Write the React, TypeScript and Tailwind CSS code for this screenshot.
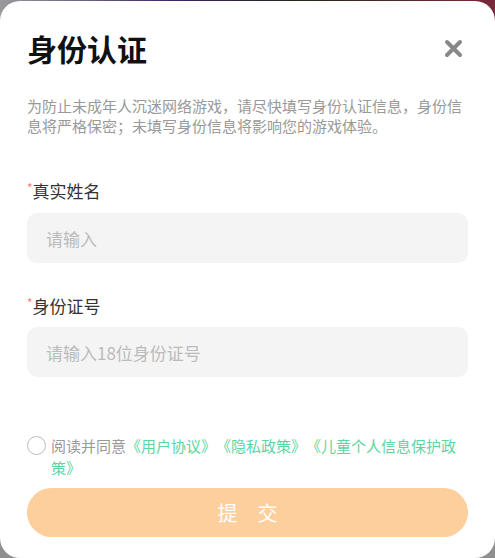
import { useState } from "react";

const FONT = "font-['Microsoft_YaHei','Noto_Sans_CJK_SC','Noto_Sans',sans-serif]";

export default function App() {
  const [agreed, setAgreed] = useState(false);

  return (
    <div
      className={`h-[558px] w-[495px] overflow-hidden bg-[linear-gradient(to_bottom,transparent_0,transparent_24px,#8f8f8f_24px),linear-gradient(to_right,#9a9a9a,#3b2466_35%,#25261c_60%,#7a2a3c)] pt-[1px] ${FONT}`}
    >
      <div className="flex h-[557px] flex-col rounded-[20px] bg-white px-[27px]">
        {/* Header */}
        <div className="flex items-center justify-between pt-[29px]">
          <h1 className="text-[30px] font-bold leading-[36px] text-[#111]">身份认证</h1>
          <button className="mr-[5px] text-[#888]" aria-label="close">
            <svg width="19" height="19" viewBox="0 0 19 19">
              <path d="M3 3 L16 16 M16 3 L3 16" stroke="currentColor" strokeWidth="4" strokeLinecap="round" />
            </svg>
          </button>
        </div>

        <p className="mt-[30px] break-all text-[15px] leading-[20px] text-[#999] [text-spacing-trim:space-all]">
          为防止未成年人沉迷网络游戏，请尽快填写身份认证信息，身份信息将严格保密；未填写身份信息将影响您的游戏体验。
        </p>

        {/* Real name */}
        <label className="mt-[44px] flex items-start text-[17px] leading-[22px] text-[#333]">
          <span className="mt-[-3px] text-[12px] text-[#f77]">*</span>
          真实姓名
        </label>
        <input
          placeholder="请输入"
          className="mt-[11px] h-[50px] w-full rounded-[10px] bg-[#f4f4f4] px-[19px] text-[17px] text-[#333] outline-none placeholder:text-[#bbb]"
        />

        {/* ID number */}
        <label className="mt-[32px] flex items-start text-[17px] leading-[22px] text-[#333]">
          <span className="mt-[-3px] text-[12px] text-[#f77]">*</span>
          身份证号
        </label>
        <input
          placeholder="请输入18位身份证号"
          className="mt-[10px] h-[50px] w-full rounded-[10px] bg-[#f4f4f4] px-[19px] text-[17px] text-[#333] outline-none placeholder:text-[#bbb]"
        />

        {/* Agreement */}
        <div className="mt-[58px] flex items-start gap-[5px]">
          <button
            onClick={() => setAgreed(!agreed)}
            className={`mt-[1px] h-[19px] w-[19px] shrink-0 rounded-full border ${agreed ? "border-[#5cd6a0] bg-[#5cd6a0]" : "border-[#bbb]"}`}
          />
          <p className="min-w-0 flex-1 break-all text-[15px] leading-[22px] text-[#999] [text-spacing-trim:space-all]">
            阅读并同意<span className="text-[#5cd6a0]">《用户协议》《隐私政策》《儿童个人信息保护政策》</span>
          </p>
        </div>

        <button className="mt-[9px] h-[49px] w-full shrink-0 rounded-full bg-[#fdcf9c] text-[20px] tracking-[20px] text-white">
          <span className="pl-[20px]">提交</span>
        </button>
      </div>
    </div>
  );
}
